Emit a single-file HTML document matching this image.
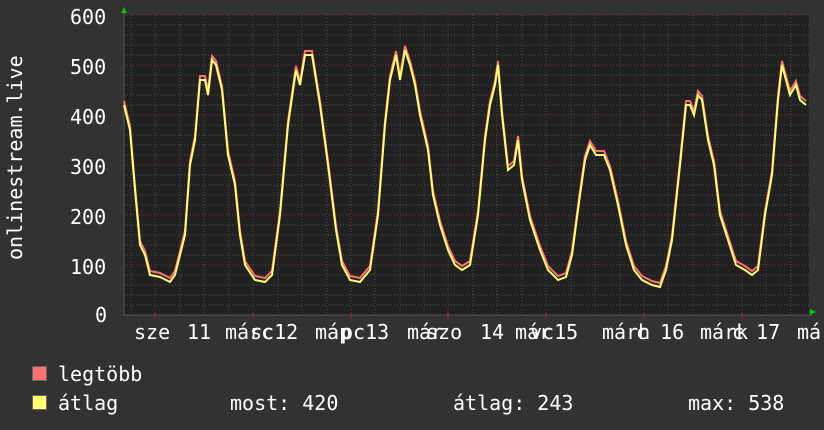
<!DOCTYPE html><html><head><style>
body{margin:0;width:824px;height:430px;background:#323232;overflow:hidden;font-family:"DejaVu Sans Mono","Liberation Mono",monospace;color:#fff;position:relative}
.t{position:absolute;font-size:20px;white-space:pre;line-height:20px}
.sq{position:absolute;width:13px;height:13px;border:1px solid #666}
</style></head><body>
<svg width="824" height="430" style="position:absolute;left:0;top:0">
<rect x="124" y="15" width="685" height="300" fill="#212121"/>
<g stroke="#4a4a4a" stroke-dasharray="1,2" stroke-width="1">
<path d="M124 25H809M124 35H809M124 45H809M124 55H809M124 75H809M124 85H809M124 95H809M124 105H809M124 125H809M124 135H809M124 145H809M124 155H809M124 175H809M124 185H809M124 195H809M124 205H809M124 225H809M124 235H809M124 245H809M124 255H809M124 275H809M124 285H809M124 295H809M124 305H809"/>
<path d="M131 15V315M180 15V315M204 15V315M229 15V315M278 15V315M302 15V315M327 15V315M375 15V315M400 15V315M424 15V315M473 15V315M497 15V315M522 15V315M571 15V315M595 15V315M620 15V315M668 15V315M693 15V315M717 15V315M766 15V315M791 15V315"/>
</g>
<g stroke="#6a3a3a" stroke-dasharray="1,2" stroke-width="1">
<path d="M124 15H809M124 65H809M124 115H809M124 165H809M124 215H809M124 265H809"/>
<path d="M155 15V315M253 15V315M351 15V315M448 15V315M546 15V315M644 15V315M742 15V315"/>
</g>
<path d="M124 315H812M124 315V12" stroke="#555" stroke-width="1"/>
<path d="M155 313v5M253 313v5M351 313v5M448 313v5M546 313v5M644 313v5M742 313v5" stroke="#a33" />
<polygon points="121,13 127,13 124,7" fill="#0c0"/>
<polygon points="810,309 810,315 816,312" fill="#0c0"/>
<polyline fill="none" stroke="#ff7070" stroke-width="2" transform="translate(0,-4)" points="124,105 130,130 135,190 140,245 145,255 150,275 160,277 170,282 175,275 185,235 190,165 195,140 200,80 205,80 208,95 212,60 216,65 222,90 228,155 235,185 240,235 245,265 255,280 265,282 272,275 280,215 288,125 296,70 300,85 305,55 312,55 320,105 328,165 336,230 342,265 350,280 360,282 370,270 378,215 385,125 390,80 396,55 400,80 405,50 410,65 415,85 420,115 428,150 433,195 440,225 448,250 455,265 462,270 470,265 478,215 485,140 490,105 495,85 498,65 502,115 508,170 514,165 518,140 522,180 530,220 540,250 548,270 558,280 566,277 572,255 580,195 585,160 590,145 596,155 604,155 610,170 618,205 626,245 634,270 642,280 652,285 660,287 666,270 672,240 680,165 686,105 690,105 694,115 698,95 702,100 708,140 714,165 720,215 728,240 736,265 745,270 752,275 758,270 765,215 772,175 778,100 782,65 786,80 790,95 796,85 800,100 806,105"/>
<polyline fill="none" stroke="#ffff70" stroke-width="2" points="124,105 130,130 135,190 140,245 145,255 150,275 160,277 170,282 175,275 185,235 190,165 195,140 200,80 205,80 208,95 212,60 216,65 222,90 228,155 235,185 240,235 245,265 255,280 265,282 272,275 280,215 288,125 296,70 300,85 305,55 312,55 320,105 328,165 336,230 342,265 350,280 360,282 370,270 378,215 385,125 390,80 396,55 400,80 405,50 410,65 415,85 420,115 428,150 433,195 440,225 448,250 455,265 462,270 470,265 478,215 485,140 490,105 495,85 498,65 502,115 508,170 514,165 518,140 522,180 530,220 540,250 548,270 558,280 566,277 572,255 580,195 585,160 590,145 596,155 604,155 610,170 618,205 626,245 634,270 642,280 652,285 660,287 666,270 672,240 680,165 686,105 690,105 694,115 698,95 702,100 708,140 714,165 720,215 728,240 736,265 745,270 752,275 758,270 765,215 772,175 778,100 782,65 786,80 790,95 796,85 800,100 806,105"/>
</svg>
<div class="t" style="left:70px;top:7px">600</div>
<div class="t" style="left:70px;top:57px">500</div>
<div class="t" style="left:70px;top:107px">400</div>
<div class="t" style="left:70px;top:157px">300</div>
<div class="t" style="left:70px;top:207px">200</div>
<div class="t" style="left:70px;top:257px">100</div>
<div class="t" style="left:95px;top:305px">0</div>
<div class="t" style="left:-80px;top:155px;transform:rotate(-90deg);width:190px;text-align:center">onlinestream.live</div>
<div class="t" style="left:134px;top:322px">sze</div>
<div class="t" style="left:187px;top:322px">11</div>
<div class="t" style="left:225px;top:322px">márc</div>
<div class="t" style="left:250px;top:322px">sc12</div>
<div class="t" style="left:315px;top:322px">máp</div>
<div class="t" style="left:341px;top:322px">pc13</div>
<div class="t" style="left:407px;top:322px">már</div>
<div class="t" style="left:426px;top:322px">szo</div>
<div class="t" style="left:480px;top:322px">14</div>
<div class="t" style="left:515px;top:322px">már</div>
<div class="t" style="left:530px;top:322px">vc15</div>
<div class="t" style="left:602px;top:322px">márh</div>
<div class="t" style="left:636px;top:322px">c 16</div>
<div class="t" style="left:700px;top:322px">márk</div>
<div class="t" style="left:732px;top:322px">c 17</div>
<div class="t" style="left:797px;top:322px">má</div>
<div class="sq" style="left:32px;top:366px;background:#ff7070"></div>
<div class="sq" style="left:32px;top:395px;background:#ffff70"></div>
<div class="t" style="left:58px;top:364px">legtöbb</div>
<div class="t" style="left:58px;top:393px">átlag</div>
<div class="t" style="left:230px;top:393px">most: 420</div>
<div class="t" style="left:453px;top:393px">átlag: 243</div>
<div class="t" style="left:688px;top:393px">max: 538</div>
</body></html>
